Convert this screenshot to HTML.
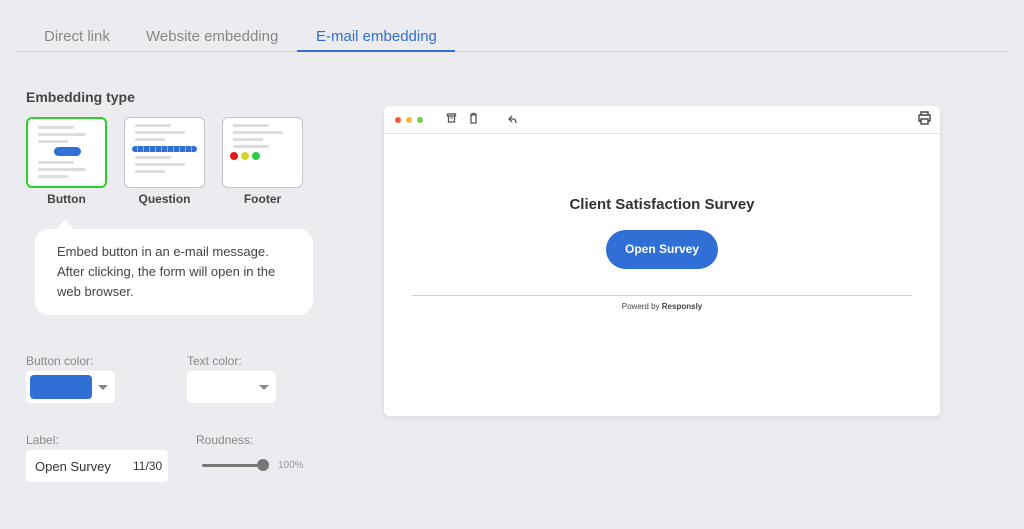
<!DOCTYPE html><html><head><style>
body{margin:0;width:1024px;height:529px;background:#ececf0;font-family:"Liberation Sans",sans-serif;position:relative;overflow:hidden;color:#333}
.a{position:absolute}
.tab{font-size:15px;color:#888;top:28px}
.card{position:absolute;top:117px;width:79px;height:69px;background:#fff;border:1px solid #c4c4c8;border-radius:6px}
.l{position:absolute;height:3px;background:#ddd;border-radius:2px;left:10px}
.cap{position:absolute;top:192px;font-size:12px;font-weight:bold;color:#444;width:81px;text-align:center}
.lab{font-size:12px;color:#888}
.box{background:#fff;border-radius:4px}
</style></head><body>
<div class="a tab" style="left:44px">Direct link</div>
<div class="a tab" style="left:146px">Website embedding</div>
<div class="a tab" style="left:316px;color:#2f6fd6">E-mail embedding</div>
<div class="a" style="left:16px;top:51px;width:991px;height:1px;background:#d4d4d8"></div>
<div class="a" style="left:297px;top:50px;width:158px;height:2px;background:#2f6fd6"></div>
<div class="a" style="left:26px;top:89px;font-size:14px;font-weight:bold;color:#444">Embedding type</div>
<div class="card" style="left:26px;border:2px solid #2ecc2e;width:77px;height:67px">
<div class="l" style="top:7px;width:36px"></div><div class="l" style="top:14px;width:48px"></div><div class="l" style="top:21px;width:30px"></div>
<div class="a" style="left:26px;top:28px;width:27px;height:9px;background:#2f6fd6;border-radius:5px"></div>
<div class="l" style="top:42px;width:36px"></div><div class="l" style="top:49px;width:48px"></div><div class="l" style="top:56px;width:30px"></div></div>
<div class="card" style="left:124px">
<div class="l" style="top:6px;width:36px"></div><div class="l" style="top:13px;width:50px"></div><div class="l" style="top:20px;width:30px"></div>
<div class="a" style="left:7px;top:28px;width:65px;height:6px;background:repeating-linear-gradient(90deg,#2f6fd6 0 5px,#8fb0ea 5px 6px);border-radius:3px"></div>
<div class="l" style="top:38px;width:36px"></div><div class="l" style="top:45px;width:50px"></div><div class="l" style="top:52px;width:30px"></div></div>
<div class="card" style="left:222px">
<div class="l" style="top:6px;width:36px"></div><div class="l" style="top:13px;width:50px"></div><div class="l" style="top:20px;width:30px"></div><div class="l" style="top:27px;width:36px"></div>
<div class="a" style="left:7px;top:34px;width:8px;height:8px;border-radius:50%;background:#e81515"></div>
<div class="a" style="left:18px;top:34px;width:8px;height:8px;border-radius:50%;background:#d6d62a"></div>
<div class="a" style="left:29px;top:34px;width:8px;height:8px;border-radius:50%;background:#2ecc40"></div></div>
<div class="cap" style="left:26px">Button</div><div class="cap" style="left:124px">Question</div><div class="cap" style="left:222px">Footer</div>
<div class="a" style="left:35px;top:229px;width:278px;height:86px;background:#fff;border-radius:14px"></div>
<div class="a" style="left:59px;top:222px;width:12px;height:12px;background:#fff;transform:rotate(45deg)"></div>
<div class="a" style="left:57px;top:242px;font-size:13px;line-height:20px;color:#444;width:232px">Embed button in an e-mail message. After clicking, the form will open in the web browser.</div>
<div class="a lab" style="left:26px;top:354px">Button color:</div>
<div class="a lab" style="left:187px;top:354px">Text color:</div>
<div class="a box" style="left:26px;top:371px;width:89px;height:32px"><div class="a" style="left:4px;top:4px;width:62px;height:24px;background:#2f6fd6;border-radius:4px"></div><div class="a" style="left:72px;top:14px;border:5px solid transparent;border-top:5px solid #888"></div></div>
<div class="a box" style="left:187px;top:371px;width:89px;height:32px"><div class="a" style="left:72px;top:14px;border:5px solid transparent;border-top:5px solid #888"></div></div>
<div class="a lab" style="left:26px;top:433px">Label:</div>
<div class="a lab" style="left:196px;top:433px">Roudness:</div>
<div class="a box" style="left:26px;top:450px;width:142px;height:32px"><span class="a" style="left:9px;top:9px;font-size:13px;color:#333">Open Survey</span><span class="a" style="left:107px;top:9px;font-size:12px;color:#333">11/30</span></div>
<div class="a" style="left:202px;top:464px;width:60px;height:3px;background:#777;border-radius:2px"></div>
<div class="a" style="left:257px;top:459px;width:12px;height:12px;background:#777;border-radius:50%"></div>
<div class="a" style="left:278px;top:460px;font-size:10px;color:#999">100%</div>
<div class="a" style="left:384px;top:106px;width:556px;height:310px;background:#fff;border-radius:5px;box-shadow:0 2px 6px rgba(0,0,0,.08)"></div>
<div class="a" style="left:384px;top:133px;width:556px;height:1px;background:#e3e3e3"></div>
<div class="a" style="left:395px;top:117px;width:6px;height:6px;border-radius:50%;background:#f05a3a"></div>
<div class="a" style="left:406px;top:117px;width:6px;height:6px;border-radius:50%;background:#f5b73a"></div>
<div class="a" style="left:417px;top:117px;width:6px;height:6px;border-radius:50%;background:#6cd04a"></div>
<svg class="a" style="left:446px;top:112px" width="80" height="14" fill="none" stroke="#555" stroke-width="1.3"><rect x="1.5" y="2" width="8" height="2"/><path d="M2.5 4v6h6V4M4.5 6h2"/><path d="M25 3v8h5V3M24 3h7M26 3V1.5h3V3"/><path d="M66 4l-3 3 3 3M63 7h4c2 0 3 1 3 4"/></svg>
<svg class="a" style="left:917px;top:111px" width="15" height="14" fill="none" stroke="#444" stroke-width="1.4"><path d="M4 4V1h7v3M2 4h11v6h-2M4 10H2V4"/><rect x="4" y="8" width="7" height="5"/></svg>
<div class="a" style="left:384px;top:196px;width:556px;text-align:center;font-size:15px;font-weight:bold;color:#333">Client Satisfaction Survey</div>
<div class="a" style="left:606px;top:230px;width:112px;height:39px;background:#2f6fd6;border-radius:20px;color:#fff;font-size:12px;font-weight:bold;text-align:center;line-height:39px">Open Survey</div>
<div class="a" style="left:412px;top:295px;width:500px;height:1px;background:#cfcfcf"></div>
<div class="a" style="left:384px;top:302px;width:556px;text-align:center;font-size:8px;color:#444">Powerd by <b>Responsly</b></div>
</body></html>
